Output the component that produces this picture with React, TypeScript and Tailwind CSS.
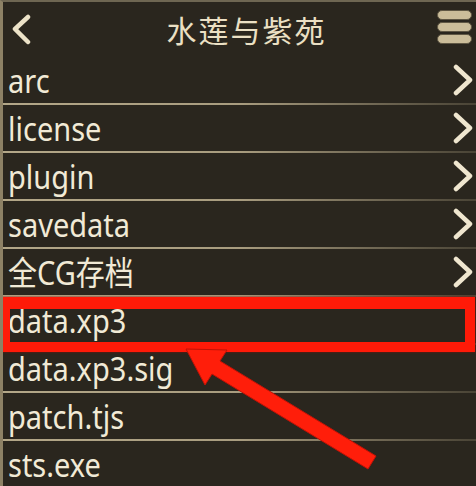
import React from "react";

const rows: { name: string; dir: boolean }[] = [
  { name: "arc", dir: true },
  { name: "license", dir: true },
  { name: "plugin", dir: true },
  { name: "savedata", dir: true },
  { name: "全CG存档", dir: true },
  { name: "data.xp3", dir: false },
  { name: "data.xp3.sig", dir: false },
  { name: "patch.tjs", dir: false },
  { name: "sts.exe", dir: false },
];

function ChevronRight() {
  return (
    <svg width="22" height="32" viewBox="0 0 22 32" className="shrink-0">
      <polyline
        points="4,3 18,16 4,29"
        fill="none"
        stroke="#efe6cf"
        strokeWidth="4.5"
        strokeLinecap="round"
        strokeLinejoin="round"
      />
    </svg>
  );
}

function Separator() {
  return <div className="h-[2px] w-full bg-gradient-to-r from-[#b3a788] via-[#a89c7f] to-[#4a4436]" />;
}

export default function App() {
  return (
    <div
      className="relative h-[486px] w-[476px] overflow-hidden bg-[#2a261e] border-l-[3px] border-t-2 border-l-[#8d8165] border-t-[#6e6652] text-[#f1ead6]"
      style={{ fontFamily: '"Noto Sans", "Open Sans", "Noto Sans CJK SC", sans-serif' }}
    >
      {/* header */}
      <div className="relative flex h-[55px] items-center justify-between pl-[9px] pr-[4px]">
        <svg width="22" height="32" viewBox="0 0 22 32">
          <polyline
            points="16,3 3,15 16,28"
            fill="none"
            stroke="#ece2c8"
            strokeWidth="4.5"
            strokeLinecap="round"
            strokeLinejoin="round"
          />
        </svg>
        <div className="absolute inset-x-0 top-0 flex h-full items-center justify-center pb-[1px] pl-[14px]">
          <span
            className="text-[30px] tracking-[2px] text-[#ebe0c4]"
            style={{ fontFamily: '"Noto Sans CJK SC", sans-serif' }}
          >
            水莲与紫苑
          </span>
        </div>
        <div className="mt-[-6px] flex flex-col gap-[2px]">
          <div className="h-[10px] w-[35px] rounded-full border border-[#5f5744] bg-[#cbbd9a]" />
          <div className="h-[10px] w-[35px] rounded-full border border-[#5f5744] bg-[#cbbd9a]" />
          <div className="h-[10px] w-[35px] rounded-full border border-[#5f5744] bg-[#cbbd9a]" />
        </div>
      </div>

      {/* list */}
      <div className="flex flex-col">
        {rows.map((r, i) => (
          <div key={r.name} className="flex flex-col">
            <div className="flex h-[46px] items-center justify-between pl-[5px] pr-[2px]">
              <span
                className="inline-block origin-center scale-y-[1.12] text-[29px] leading-none"
                style={{ fontFamily: '"Noto Sans", "Noto Sans CJK SC", sans-serif' }}
              >
                {r.name}
              </span>
              {r.dir && <ChevronRight />}
            </div>
            {i < rows.length - 1 && <Separator />}
          </div>
        ))}
      </div>

      {/* red highlight box */}
      <div className="absolute left-[-3px] top-[295px] h-[55px] w-[475px] border-t-[12px] border-b-[10px] border-l-[10px] border-r-[10px] border-[#ff1a08] shadow-[0_0_2px_#8a1208]" />

      {/* red arrow */}
      <svg className="absolute left-[-3px] top-[-2px]" width="476" height="486" viewBox="0 0 476 486">
        <polygon
          points="186,349 227,350 220,361 376,456 368,469 212,374 205,385"
          fill="#ff1e0a"
          stroke="#c01206"
          strokeWidth="1"
          strokeLinejoin="round"
        />
      </svg>
    </div>
  );
}
